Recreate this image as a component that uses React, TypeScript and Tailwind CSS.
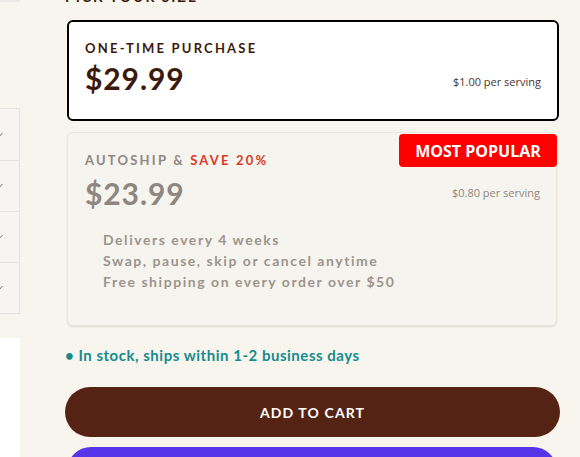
import React from "react";

const perks = [
  "Delivers every 4 weeks",
  "Swap, pause, skip or cancel anytime",
  "Free shipping on every order over $50",
];

function Check() {
  return (
    <svg width="6" height="6" viewBox="0 0 6 6" className="absolute -left-[3px] top-1/2 -translate-y-1/2">
      <path d="M0 4 L1.5 5.5 L5.5 1" fill="none" stroke="#555" strokeWidth="0.8" />
    </svg>
  );
}

export default function App() {
  return (
    <div
      className="relative flex h-[457px] w-[580px] overflow-hidden bg-[#f8f5ee]"
      style={{ fontFamily: "Lato, 'Open Sans', sans-serif" }}
    >
      {/* Left strip (cut off gallery / table) */}
      <div className="flex w-[20px] shrink-0 flex-col">
        <div className="h-[2px] shrink-0 bg-[#ebe9e5]" />
        <div className="mt-[106px] flex shrink-0 flex-col border-y border-r border-[#e6e3de] bg-[#f6f5f2]">
          {[0, 1, 2, 3].map((i) => (
            <div key={i} className={`relative h-[51px] ${i > 0 ? "border-t border-[#e6e3de]" : ""}`}>
              <Check />
            </div>
          ))}
        </div>
        <div className="mt-[24px] flex-1 bg-white" />
      </div>

      {/* Main column */}
      <div className="ml-[45px] flex w-[495px] flex-col">
        <div className="-mt-[9px] h-[12px] shrink-0 text-[14px] font-bold leading-[12px] tracking-[0.14em] text-[#3b1a0c]">
          PICK YOUR SIZE
        </div>

        {/* One-time purchase */}
        <div className="ml-[2px] mt-[17px] flex h-[101px] w-[492px] shrink-0 justify-between rounded-[6px] border-2 border-black bg-white pl-[16px] pr-[16px] pt-[18px]">
          <div className="flex flex-col">
            <span className="text-[13px] font-bold leading-[16px] tracking-[0.17em] text-[#3b1a0c]">ONE-TIME PURCHASE</span>
            <span className="mt-[4px] text-[30px] font-bold leading-[36px] tracking-[0.03em] text-[#3b1a0c]">$29.99</span>
          </div>
          <span className="mt-[35px] text-[11px] leading-[14px] text-[#4a3430]" style={{ fontFamily: "'Open Sans', sans-serif" }}>
            $1.00 per serving
          </span>
        </div>

        {/* Autoship */}
        <div className="relative ml-[2px] mt-[11px] flex h-[194px] w-[490px] shrink-0 flex-col rounded-[6px] border border-[#ebe7df] bg-[#f6f4ef] pl-[17px] pr-[16px] pt-[19px] shadow-[0_1px_2px_rgba(0,0,0,0.12)]">
          <div className="absolute -right-px top-[1px] flex h-[33px] w-[158px] items-center justify-center rounded-[4px] bg-[#ff0000] text-[16px] font-bold text-white" style={{ fontFamily: "'Open Sans', sans-serif" }}>
            MOST POPULAR
          </div>
          <span className="text-[13px] font-bold leading-[16px] tracking-[0.17em] text-[#8e8781]">
            AUTOSHIP &amp; <span className="text-[#d93a25]">SAVE 20%</span>
          </span>
          <div className="mt-[7px] flex items-start justify-between">
            <span className="text-[30px] font-bold leading-[36px] tracking-[0.03em] text-[#8e8781]">$23.99</span>
            <span className="mt-[11px] text-[11px] leading-[14px] text-[#8e8781]" style={{ fontFamily: "'Open Sans', sans-serif" }}>
              $0.80 per serving
            </span>
          </div>
          <ul className="ml-[18px] mt-[18px] flex flex-col">
            {perks.map((p) => (
              <li key={p} className="text-[14px] font-bold leading-[21px] tracking-[0.11em] text-[#9c948c]">
                {p}
              </li>
            ))}
          </ul>
        </div>

        <div className="mt-[20px] shrink-0 text-[15px] font-bold leading-[18px] tracking-[0.035em] text-[#178b8c]">
          • In stock, ships within 1-2 business days
        </div>

        <button className="mt-[23px] flex h-[50px] w-[495px] shrink-0 items-center justify-center rounded-full bg-[#552314] text-[14px] font-bold tracking-[0.08em] text-white">
          ADD TO CART
        </button>
        <div className="ml-[2px] mt-[10px] h-[40px] w-[490px] shrink-0 rounded-t-[24px] bg-[#5634ea]" />
      </div>
    </div>
  );
}
